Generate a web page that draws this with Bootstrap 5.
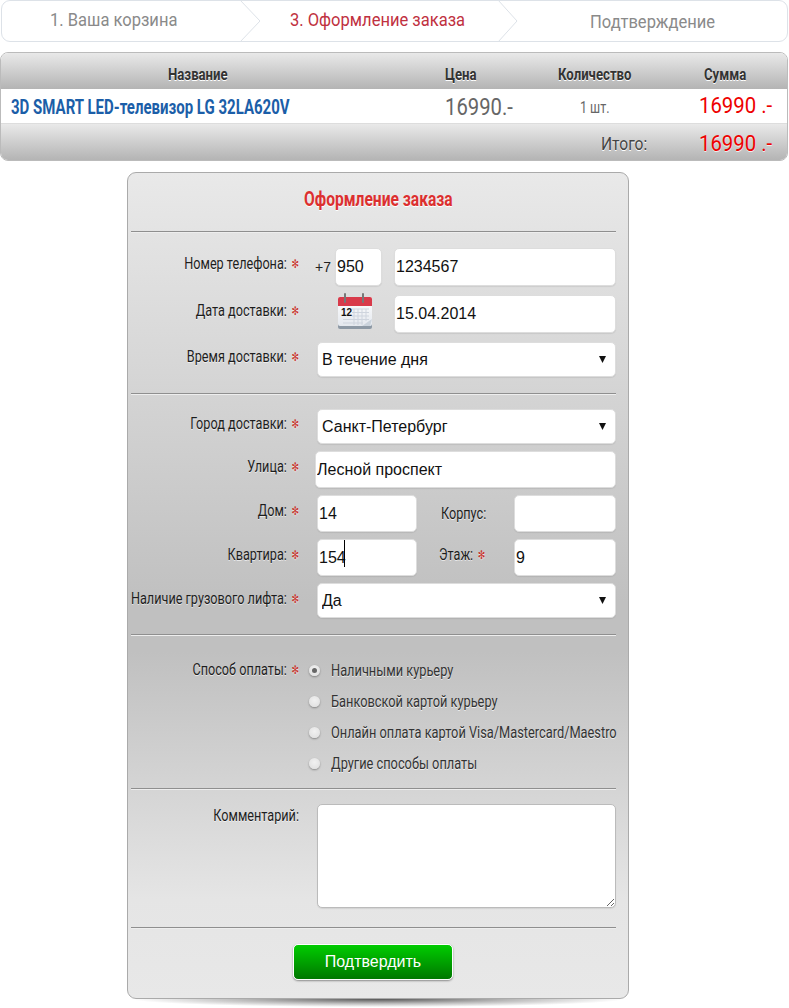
<!DOCTYPE html>
<html lang="ru"><head><meta charset="utf-8"><title>Оформление заказа</title>
<link href="https://cdn.jsdelivr.net/npm/bootstrap@5.3.0/dist/css/bootstrap.min.css" rel="stylesheet">
<style>
html,body{height:1008px;overflow:hidden}
body{font-family:Roboto,"Liberation Sans",sans-serif;font-size:16px;color:#222;line-height:1.2;background:#fff}
.nar{display:inline-block;white-space:nowrap;transform-origin:left center;transform:scaleX(.745)}
.steps{height:42px;margin:0 1px 10px;border:1px solid #dde2e8;border-radius:9px;position:relative;font-size:19px;color:#8a8a8a}
.steps>div{position:absolute;top:8px;white-space:nowrap}
.steps>div .nar{transform:scaleX(.87)}
.steps .s1{left:48px}.steps .s2{left:288px;color:#c0313f}.steps .s3{left:588px;top:10px}
.steps svg{position:absolute;top:-1px;width:22px;height:42px}
.cart{height:109px;width:788px;border:1px solid #bbb;border-radius:8px;overflow:hidden;margin-bottom:11px}
.cart-head,.cart-foot{height:36px;background:linear-gradient(#e9e9e9,#b4b4b4);text-shadow:0 1px 0 #fff}
.cart-head{font-weight:700;font-size:17px;color:#333;line-height:42px}
.cart-head>span,.cart-mid>span,.cart-foot>span{position:absolute}
.cart-head>span{transform:scaleX(.775)}
.cart-head,.cart-mid,.cart-foot{position:relative}
.cart-mid{height:35px;background:#fff;border-bottom:1px solid #ddd}
.pname{left:10px;top:6px;font-weight:700;font-size:20px;color:#1b5ea8;transform:scaleX(.75)!important}
.pprice{left:444px;top:5px;font-size:23px;color:#666;transform:scaleX(.88)!important}
.pqty{left:579px;top:9px;font-size:16px;color:#666;transform:scaleX(.78)!important}
.ptotal{left:698px;font-size:22px;color:#e00;top:4px;transform:scaleX(.925)!important}
.cart-foot .ptotal{top:7px;text-shadow:0 1px 0 #eee}
.itogo{left:600px;top:9px;font-size:19px;color:#444;transform:scaleX(.82)!important}
.order{position:relative;width:502px;height:827px;margin-left:127px;border:1px solid #aaa;border-radius:9px;padding:0 12px 0 3px;
background:linear-gradient(#e9e9e9 0,#c0c0c0 52%,#c0c0c0 58%,#e5e5e5 88%,#e8e8e8 100%)}
.order::after{content:"";position:absolute;left:8px;right:8px;bottom:-9px;height:8px;background:radial-gradient(ellipse at 50% 0,#555 0,#bbb 40%,rgba(255,255,255,0) 72%)}
.order-title{text-align:center;font-weight:700;font-size:20px;color:#dc2f2f;padding:14px 0 0 10px;height:58px;text-shadow:0 1px 0 #fff}
.order-title .nar{transform-origin:center;transform:scaleX(.78)}
.rule{height:1px;background:#8f8f8f;box-shadow:0 1px 0 #eee}
.frow{display:flex;align-items:flex-start}
.lbl{width:171px;flex:none;font-size:17px;color:#1d1d1d;padding-top:5px;padding-right:3px;text-shadow:0 1px 0 rgba(255,255,255,.6)}
.lbl.pt-mid{padding-top:4px}.lbl.pt-top{padding-top:1px}
.lbl .nar{display:block;width:260px;margin-left:-92px;text-align:right;transform-origin:right center}
.req{color:#c8322a;font-family:"DejaVu Sans",sans-serif;font-size:12px;margin-left:2px;vertical-align:1px}
.fld{font-family:"Liberation Sans",sans-serif;font-size:16px;color:#111;background:#fff;border:1px solid #ddd;border-radius:5px;padding:0 1px;height:37px;outline:0;box-shadow:0 1px 1px rgba(0,0,0,.08);display:block}
select.fld{appearance:none;-webkit-appearance:none;padding-left:4px;height:35px;width:299px;margin-left:15px;
background:#fff url("data:image/svg+xml,%3Csvg xmlns='http://www.w3.org/2000/svg' width='8' height='7'%3E%3Cpath d='M0 0h7L3.500 7z' fill='%23111'/%3E%3C/svg%3E") no-repeat right 8px center}
.plus{margin-left:13px;flex:none;font-family:"Liberation Sans",sans-serif;font-size:14px;padding-top:11px;color:#222;width:20px}
.w47{width:47px;margin-right:12px;height:38px}
.w222{width:222px;height:38px}
.w301{width:301px;margin-left:13px}
.calwrap{width:77px;margin-left:15px;flex:none;padding-left:20px;margin-top:-2px}
.w100{width:100px;margin-left:15px}
.w102{width:102px}
.lblmid{width:97px;flex:none;font-size:17px;color:#1d1d1d;padding-top:8px;padding-left:24px;white-space:nowrap;text-shadow:0 1px 0 rgba(255,255,255,.6)}
.lblmid.up{padding-top:5px;padding-left:22px}
.caretwrap{position:relative}
.caretbar{position:absolute;left:42px;top:1px;height:27px;width:1px;background:#000}
.pay{margin-left:8px}
.payitem{display:flex;align-items:center;height:31px;color:#333;font-size:17px;text-shadow:0 1px 0 rgba(255,255,255,.7)}
.payitem .nar{transform:scaleX(.753)}
.dot{width:11px;height:11px;border-radius:50%;background:radial-gradient(circle at 50% 40%,#f1f1f1,#ddd);box-shadow:0 1px 2px rgba(0,0,0,.35);margin-right:11px;margin-left:-1px;flex:none;position:relative}
.dot.on::after{content:"";position:absolute;left:3px;top:3px;width:5px;height:5px;border-radius:50%;background:#666}
textarea.fld{width:299px;height:104px;margin-left:15px;resize:both;border-color:#bbb}
.submit{display:block;margin:16px 0 0 162px;width:160px;height:36px;background:linear-gradient(#0c0,#070);border:1px solid #fff;border-radius:5px;box-shadow:0 1px 2px rgba(0,0,0,.4);color:#fff;font-family:"Liberation Sans",sans-serif;font-size:16px;padding:0}
.mt-a{margin-top:15px}.mt-f{margin-top:16px}.mt-b{margin-top:9px}.mt-c{margin-top:7px}.rule16{margin-top:16px}
</style></head><body>
<div class="steps">
 <div class="s1"><span class="nar">1. Ваша корзина</span></div><div class="s2"><span class="nar">3. Оформление заказа</span></div><div class="s3"><span class="nar">Подтверждение</span></div>
 <svg style="left:237px" viewBox="0 0 22 42"><path d="M1 0L21 21L1 42" fill="none" stroke="#dde2e8"/></svg>
 <svg style="left:495px" viewBox="0 0 22 42"><path d="M1 0L20 21L1 42" fill="none" stroke="#dde2e8"/></svg>
</div>
<div class="cart">
 <div class="cart-head"><span class="nar" style="left:167px">Название</span><span class="nar" style="left:444px">Цена</span><span class="nar" style="left:557px">Количество</span><span class="nar" style="left:703px">Сумма</span></div>
 <div class="cart-mid"><span class="nar pname">3D SMART LED-телевизор LG 32LA620V</span><span class="nar pprice">16990.-</span><span class="nar pqty">1 шт.</span><span class="nar ptotal">16990 .-</span></div>
 <div class="cart-foot"><span class="nar itogo">Итого:</span><span class="nar ptotal">16990 .-</span></div>
</div>
<div class="order">
 <div class="order-title"><span class="nar">Оформление заказа</span></div>
 <div class="rule"></div>
 <div class="frow mt-f"><div class="lbl"><span class="nar">Номер телефона: <span class="req">✻</span></span></div><div class="plus">+7</div><input class="fld w47" value="950"><input class="fld w222" value="1234567"></div>
 <div class="frow mt-b"><div class="lbl"><span class="nar">Дата доставки: <span class="req">✻</span></span></div><div class="calwrap">
  <svg width="36" height="38" viewBox="0 0 36 38"><defs><linearGradient id="g" x1="0" y1="0" x2="0" y2="1"><stop offset="0" stop-color="#fff"/><stop offset="1" stop-color="#e4e8ee"/></linearGradient></defs>
  <rect x="1" y="5" width="34" height="31" rx="2" fill="#8d99a5"/><rect x="1" y="4" width="34" height="29" rx="2" fill="url(#g)"/><path d="M1 13V6a2 2 0 0 1 2-2h30a2 2 0 0 1 2 2v7z" fill="#d83a4a"/>
  <path d="M8 9V1M26 9V1" stroke="#777" stroke-width="2" stroke-linecap="round"/>
  <path d="M15 16h17M15 19.500h17M15 23h17M6 26.500h26M6 30h20M17 16v16M21 16v16M25 16v16M29 16v12" stroke="#cfd5de" stroke-width="1"/>
  <text x="4" y="23" font-family="Liberation Sans,sans-serif" font-size="10" font-weight="700" fill="#111">12</text>
  <path d="M25 33l10-7-2 7z" fill="#cbd3dc"/></svg></div><input class="fld w222" value="15.04.2014"></div>
 <div class="frow mt-b"><div class="lbl pt-mid"><span class="nar">Время доставки: <span class="req">✻</span></span></div><select class="fld"><option>В течение дня</option></select></div>
 <div class="rule rule16"></div>
 <div class="frow mt-a"><div class="lbl pt-mid"><span class="nar">Город доставки: <span class="req">✻</span></span></div><select class="fld"><option>Санкт-Петербург</option></select></div>
 <div class="frow mt-c"><div class="lbl"><span class="nar">Улица: <span class="req">✻</span></span></div><input class="fld w301" value="Лесной проспект"></div>
 <div class="frow mt-c"><div class="lbl"><span class="nar">Дом: <span class="req">✻</span></span></div><input class="fld w100" value="14"><div class="lblmid"><span class="nar">Корпус:</span></div><input class="fld w102"></div>
 <div class="frow mt-c"><div class="lbl"><span class="nar">Квартира: <span class="req">✻</span></span></div><div class="caretwrap"><input class="fld w100" value="154"><span class="caretbar"></span></div><div class="lblmid up"><span class="nar">Этаж: <span class="req">✻</span></span></div><input class="fld w102" value="9"></div>
 <div class="frow mt-c"><div class="lbl"><span class="nar">Наличие грузового лифта: <span class="req">✻</span></span></div><select class="fld"><option>Да</option></select></div>
 <div class="rule rule16"></div>
 <div class="frow" style="margin-top:20px"><div class="lbl pt-mid"><span class="nar">Способ оплаты: <span class="req">✻</span></span></div>
  <div class="pay">
   <div class="payitem"><span class="dot on"></span><span class="nar">Наличными курьеру</span></div>
   <div class="payitem"><span class="dot"></span><span class="nar">Банковской картой курьеру</span></div>
   <div class="payitem"><span class="dot"></span><span class="nar">Онлайн оплата картой Visa/Mastercard/Maestro</span></div>
   <div class="payitem"><span class="dot"></span><span class="nar">Другие способы оплаты</span></div>
  </div></div>
 <div class="rule" style="margin-top:9px"></div>
 <div class="frow mt-a"><div class="lbl pt-top"><span class="nar">Комментарий:</span></div><textarea class="fld"></textarea></div>
 <div class="rule" style="margin-top:19px"></div>
 <button class="submit" type="button">Подтвердить</button>
</div>
<script src="https://cdn.jsdelivr.net/npm/bootstrap@5.3.0/dist/js/bootstrap.bundle.min.js"></script>
</body></html>
